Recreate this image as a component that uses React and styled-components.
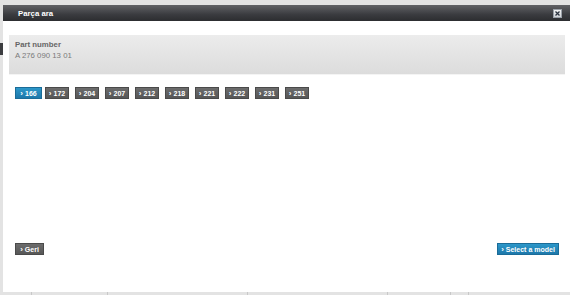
import React from "react";
import styled, { createGlobalStyle } from "styled-components";

const Global = createGlobalStyle`
  html, body { margin: 0; padding: 0; }
  body { font-family: "Liberation Sans", Arial, sans-serif; background: #e3e3e3; }
`;

const Page = styled.div`
  width: 570px;
  height: 295px;
  overflow: hidden;
  display: flex;
  flex-direction: column;
  background: #e3e3e3;
`;

const Main = styled.div`
  display: flex;
  padding-top: 5px;
`;

const Gutter = styled.div`
  width: 3px;
  flex: none;
  display: flex;
  flex-direction: column;
`;

const GutterTab = styled.div`
  margin-top: 38px;
  height: 12px;
  background: #3c3d40;
`;

const Dialog = styled.div`
  flex: 1;
  height: 287px;
  background: #ffffff;
  display: flex;
  flex-direction: column;
`;

const TitleBar = styled.div`
  height: 16px;
  flex: none;
  display: flex;
  align-items: center;
  justify-content: space-between;
  padding: 0 8px 0 15px;
  background: linear-gradient(#616266, #3a3b3f 60%, #2c2d30);
  color: #fff;
  font-weight: bold;
  font-size: 7.8px;
`;

const CloseBox = styled.div`
  width: 7px;
  height: 7px;
  border: 1px solid #9aa0a8;
  background: linear-gradient(#f4f4f4, #cfd2d6);
  display: flex;
  align-items: center;
  justify-content: center;
`;

const InfoPanel = styled.div`
  margin: 14px 5px 0 6px;
  height: 40px;
  box-sizing: border-box;
  padding: 4px 6px;
  background: linear-gradient(#ececec, #dcdcdc);
  border-bottom: 1px solid #f4f4f4;
`;

const Label = styled.div`
  color: #666;
  font-weight: bold;
  font-size: 7.8px;
  line-height: 11px;
`;

const Value = styled.div`
  color: #7a7a7a;
  font-size: 7.8px;
  line-height: 11px;
`;

const ButtonRow = styled.div`
  display: flex;
  margin: 12px 0 0 12px;
`;

const Btn = styled.div`
  height: 12px;
  box-sizing: border-box;
  display: flex;
  align-items: center;
  justify-content: center;
  ${(p) => (p.$w ? `width: ${p.$w}px;` : "padding: 0 4px;")}
  margin-right: ${(p) => p.$gap ?? 0}px;
  font-size: 7px;
  font-weight: bold;
  color: #fff;
  white-space: nowrap;
  border: 1px solid ${(p) => (p.$blue ? "#1b6c98" : "#4a4a4a")};
  background: ${(p) =>
    p.$blue
      ? "linear-gradient(#2c97c9, #1d78ab)"
      : "linear-gradient(#6c6c6c, #575757)"};
`;

const Chev = styled.span`
  font-size: 8px;
  margin-right: 2px;
`;

const Spacer = styled.div`
  flex: 1;
`;

const Footer = styled.div`
  display: flex;
  justify-content: space-between;
  margin: 0 11px 37px 12px;
`;

const Strip = styled.div`
  flex: 1;
  display: flex;
  margin-left: 3px;
`;

const Cell = styled.div`
  width: ${(p) => p.$w}px;
  flex: none;
  border-right: 1px solid #c8c8c8;
`;

const pages = ["166", "172", "204", "207", "212", "218", "221", "222", "231", "251"];

export default function App() {
  return (
    <>
      <Global />
      <Page>
        <Main>
          <Gutter>
            <GutterTab />
          </Gutter>
          <Dialog>
            <TitleBar>
              <span>Parça ara</span>
              <CloseBox>
                <svg width="5" height="5" viewBox="0 0 5 5">
                  <path d="M0.5 0.5L4.5 4.5M4.5 0.5L0.5 4.5" stroke="#2c3440" strokeWidth="1.3" />
                </svg>
              </CloseBox>
            </TitleBar>
            <InfoPanel>
              <Label>Part number</Label>
              <Value>A 276 090 13 01</Value>
            </InfoPanel>
            <ButtonRow>
              {pages.map((p, i) => (
                <Btn
                  key={p}
                  $blue={i === 0}
                  $w={i === 0 ? 27 : 24}
                  $gap={i === 0 ? 3 : 6}
                >
                  <Chev>›</Chev>
                  {p}
                </Btn>
              ))}
            </ButtonRow>
            <Spacer />
            <Footer>
              <Btn $w={29}>
                <Chev>›</Chev>Geri
              </Btn>
              <Btn $blue $w={62}>
                <Chev>›</Chev>Select a model
              </Btn>
            </Footer>
          </Dialog>
        </Main>
        <Strip>
          <Cell $w={28} />
          <Cell $w={75} />
          <Cell $w={139} />
          <Cell $w={139} />
          <Cell $w={62} />
          <Cell $w={17} />
        </Strip>
      </Page>
    </>
  );
}
